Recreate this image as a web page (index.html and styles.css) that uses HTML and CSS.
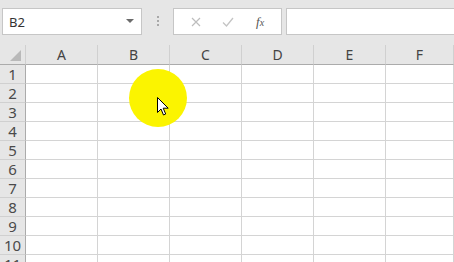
FILE: index.html
```html
<!doctype html>
<html lang="en">
<head>
  <meta charset="utf-8" />
  <title>Sheet</title>
  <link rel="stylesheet" href="styles.css">
</head>
<body>
  <div class="toolbar">
    <div class="namebox">
      <span>B2</span>
      <svg class="caret" width="8" height="5" viewBox="0 0 8 5"><path d="M0 0h8L4 4z" fill="#6b6b6b"/></svg>
    </div>
    <div class="grip"><i></i><i></i><i></i></div>
    <div class="fxbox">
      <svg class="btn" width="10" height="10" viewBox="0 0 10 10"><path d="M1 1l8 8M9 1l-8 8" stroke="#bdbdbd" stroke-width="1.2"/></svg>
      <svg class="btn" width="12" height="10" viewBox="0 0 12 10"><path d="M1 5.5l3.5 3.5L11 1" stroke="#c4c4c4" stroke-width="1.3" fill="none"/></svg>
      <span class="fx">f<sub>x</sub></span>
    </div>
    <div class="formula"></div>
  </div>

  <div class="sheet">
    <div class="corner"></div><div class="col">A</div><div class="col">B</div><div class="col">C</div><div class="col">D</div><div class="col">E</div><div class="col">F</div>
    <div class="num">1</div><div></div><div></div><div></div><div></div><div></div><div></div>
    <div class="num">2</div><div></div><div></div><div></div><div></div><div></div><div></div>
    <div class="num">3</div><div></div><div></div><div></div><div></div><div></div><div></div>
    <div class="num">4</div><div></div><div></div><div></div><div></div><div></div><div></div>
    <div class="num">5</div><div></div><div></div><div></div><div></div><div></div><div></div>
    <div class="num">6</div><div></div><div></div><div></div><div></div><div></div><div></div>
    <div class="num">7</div><div></div><div></div><div></div><div></div><div></div><div></div>
    <div class="num">8</div><div></div><div></div><div></div><div></div><div></div><div></div>
    <div class="num">9</div><div></div><div></div><div></div><div></div><div></div><div></div>
    <div class="num">10</div><div></div><div></div><div></div><div></div><div></div><div></div>
    <div class="num">11</div><div></div><div></div><div></div><div></div><div></div><div></div>
  </div>

  <div class="spot"></div>
  <svg class="pointer" width="13" height="20" viewBox="0 0 13 20">
    <path d="M0.5 0.5v15l3.5-3.5 2.5 6 2.2-1-2.5-5.8h5z" fill="#fff" stroke="#000" stroke-width="1" stroke-linejoin="round"/>
  </svg>
</body>
</html>
```

FILE: styles.css
```css
html, body {
  margin: 0;
  padding: 0;
}

body {
  width: 454px;
  height: 262px;
  overflow: hidden;
  background: #fff;
  font-family: "Noto Sans", "Liberation Sans", sans-serif;
  color: #444;
  position: relative;
}

.toolbar {
  display: flex;
  align-items: flex-start;
  height: 45px;
  padding: 8px 0 0 2px;
  box-sizing: border-box;
  background: #e6e6e6;
}

.namebox {
  display: flex;
  align-items: center;
  justify-content: space-between;
  width: 140px;
  height: 27px;
  box-sizing: border-box;
  padding: 0 7px 0 6px;
  background: #fff;
  border: 1px solid #c6c6c6;
  font-size: 13px;
  color: #333;
}

.grip {
  display: flex;
  flex-direction: column;
  align-items: center;
  gap: 2px;
  width: 31px;
  padding-top: 8px;
}

.grip i {
  width: 2px;
  height: 2px;
  background: #a8a8a8;
}

.fxbox {
  display: flex;
  align-items: center;
  justify-content: space-around;
  width: 109px;
  height: 27px;
  box-sizing: border-box;
  padding: 0 6px;
  background: #fff;
  border: 1px solid #c6c6c6;
}

.fx {
  font-family: "Liberation Serif", serif;
  font-style: italic;
  font-size: 13px;
  color: #555;
}

.fx sub {
  font-size: 10px;
  vertical-align: 0;
}

.formula {
  flex: 1;
  height: 27px;
  margin-left: 4px;
  box-sizing: border-box;
  background: #fff;
  border: 1px solid #c6c6c6;
  border-right: none;
}

.sheet {
  display: grid;
  grid-template-columns: 26px repeat(5, 72px) 1fr;
  grid-template-rows: 20px;
  grid-auto-rows: 19px;
}

.sheet > div {
  box-sizing: border-box;
  border-right: 1px solid #d4d4d4;
  border-bottom: 1px solid #d4d4d4;
}

.sheet .corner,
.sheet .col {
  background: #e6e6e6;
  border-bottom-color: #ababab;
  border-right-color: #d0d0d0;
}

.corner {
  position: relative;
}

.corner::after {
  content: "";
  position: absolute;
  right: 4px;
  bottom: 3px;
  border-style: solid;
  border-width: 0 0 11px 11px;
  border-color: transparent transparent #b9b9b9 transparent;
}

.col {
  text-align: center;
  font-size: 14px;
  line-height: 20px;
}

.sheet .num {
  background: #e6e6e6;
  border-right-color: #ababab;
  border-bottom-color: #d0d0d0;
  text-align: center;
  font-size: 15px;
  line-height: 18px;
  color: #4a4a4a;
}

.spot {
  position: absolute;
  left: 129px;
  top: 69px;
  width: 58px;
  height: 58px;
  border-radius: 50%;
  background: #fbf400;
}

.pointer {
  position: absolute;
  left: 157px;
  top: 97px;
}
```
